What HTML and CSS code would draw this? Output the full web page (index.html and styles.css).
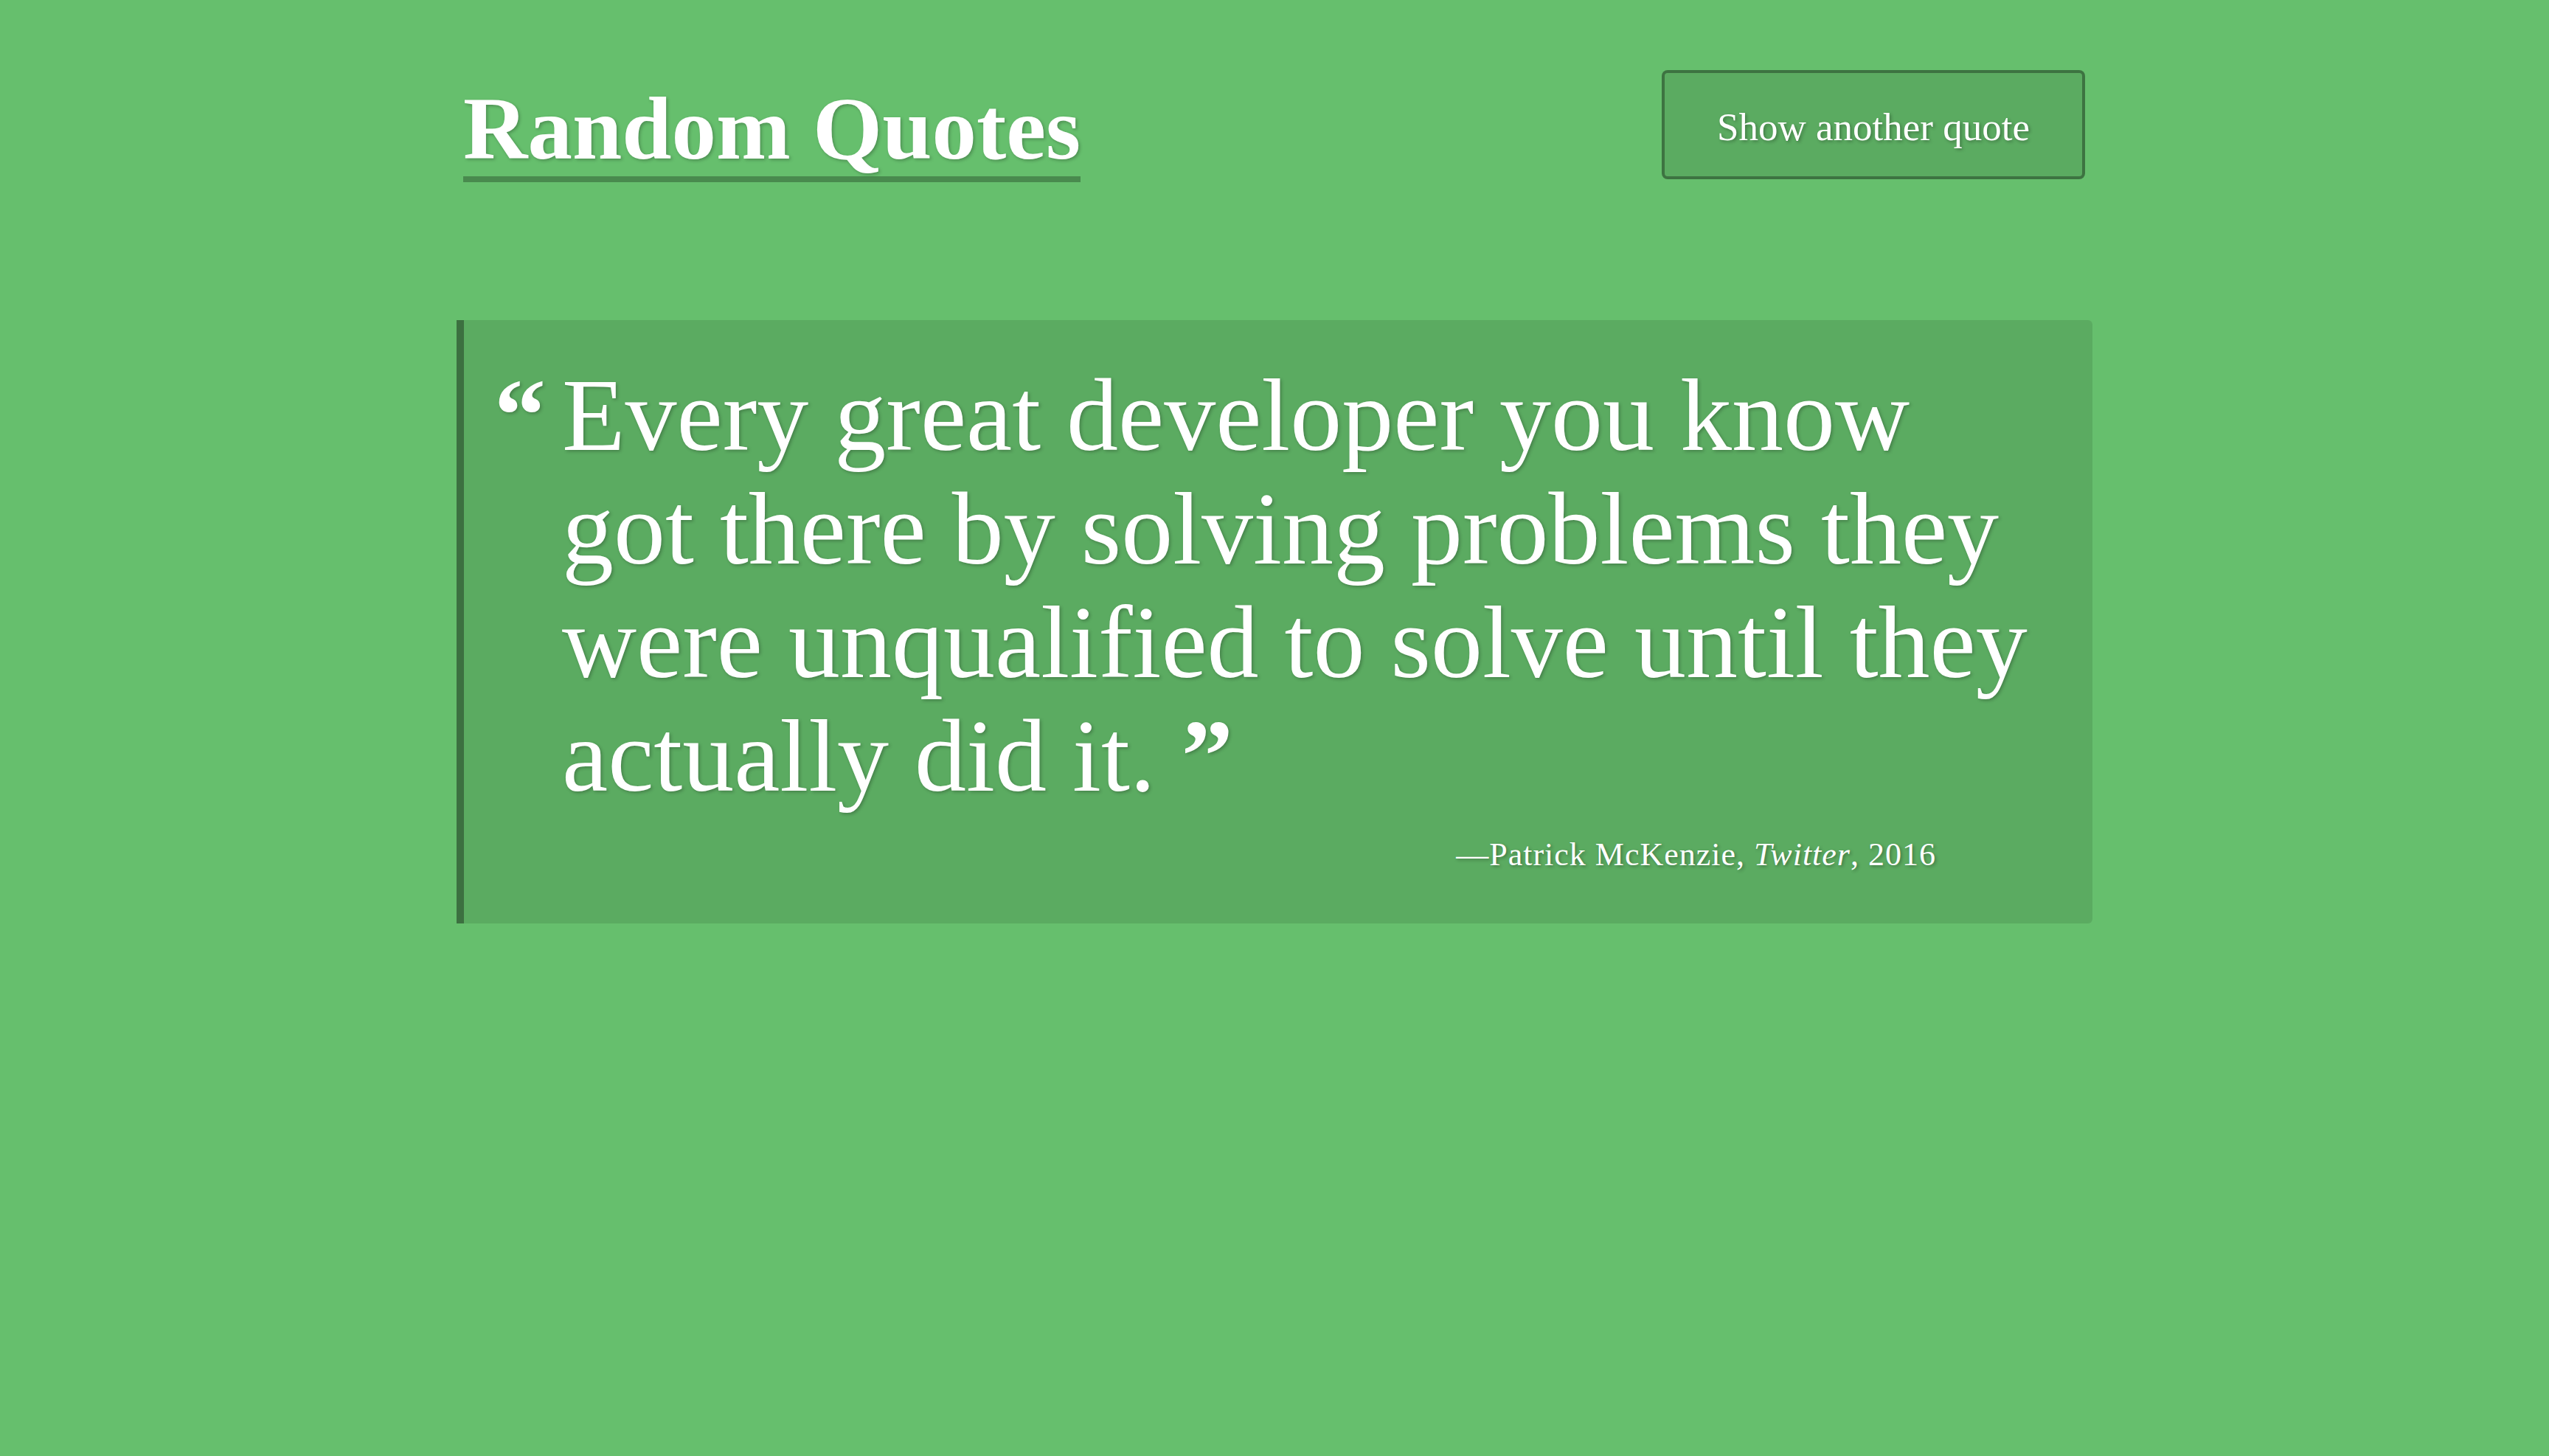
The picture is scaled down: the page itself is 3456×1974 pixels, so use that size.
FILE: index.html
```html
<!DOCTYPE html>
<html lang="en">
<head>
<meta charset="utf-8">
<title>Random Quotes</title>
<link rel="stylesheet" href="styles.css">
</head>
<body>
<div class="page">
  <header class="header">
    <h1 class="title">Random Quotes</h1>
    <button class="btn" type="button">Show another quote</button>
  </header>
  <figure class="quote-box">
    <blockquote class="quote"><span class="mark open">“</span>Every great developer you know got there by solving problems they were unqualified to solve until they actually did it. <span class="mark">”</span></blockquote>
    <figcaption class="cite">—Patrick McKenzie, <em>Twitter</em>, 2016</figcaption>
  </figure>
</div>
</body>
</html>
```

FILE: styles.css
```css
html, body {
  margin: 0;
  padding: 0;
}
body {
  background: #66bf6d;
  color: #ffffff;
  font-family: "Liberation Serif", "Times New Roman", serif;
  min-height: 1974px;
}
.page {
  width: 2218px;
  margin: 0 auto;
}
.header {
  display: flex;
  justify-content: space-between;
  align-items: flex-start;
  padding: 95px 10px 0 9px;
}
.title {
  margin: 19px 0 0 0;
  font-size: 121px;
  font-weight: 700;
  line-height: 1;
  padding-bottom: 4px;
  border-bottom: 8px solid rgba(0, 0, 0, 0.28);
  text-shadow: 2px 2px 4px rgba(0, 0, 0, 0.25);
}
.btn {
  box-sizing: border-box;
  height: 148px;
  width: 574px;
  padding: 6px 0 0 0;
  background: rgba(0, 0, 0, 0.1);
  border: 4px solid rgba(0, 0, 0, 0.33);
  border-radius: 8px;
  color: #ffffff;
  font-family: "Liberation Serif", "Times New Roman", serif;
  font-size: 53px;
  text-shadow: 2px 2px 4px rgba(0, 0, 0, 0.3);
  cursor: pointer;
}
.quote-box {
  margin: 187px 0 0 0;
  background: rgba(0, 0, 0, 0.1);
  border-left: 10px solid rgba(0, 0, 0, 0.35);
  border-radius: 0 6px 6px 0;
  padding: 52px 60px 67px 133px;
  height: 818px;
  box-sizing: border-box;
}
.quote {
  margin: 0;
  font-size: 140px;
  line-height: 154px;
  text-shadow: 2px 2px 4px rgba(0, 0, 0, 0.25);
}
.mark {
  font-weight: 700;
  line-height: 1;
}
.mark.open {
  display: inline-block;
  width: 92px;
  margin-left: -92px;
}
.cite {
  margin-top: 31px;
  text-align: right;
  padding-right: 152px;
  font-size: 44px;
  letter-spacing: 1px;
  text-shadow: 2px 2px 4px rgba(0, 0, 0, 0.3);
}
.cite em {
  font-style: italic;
}
```
